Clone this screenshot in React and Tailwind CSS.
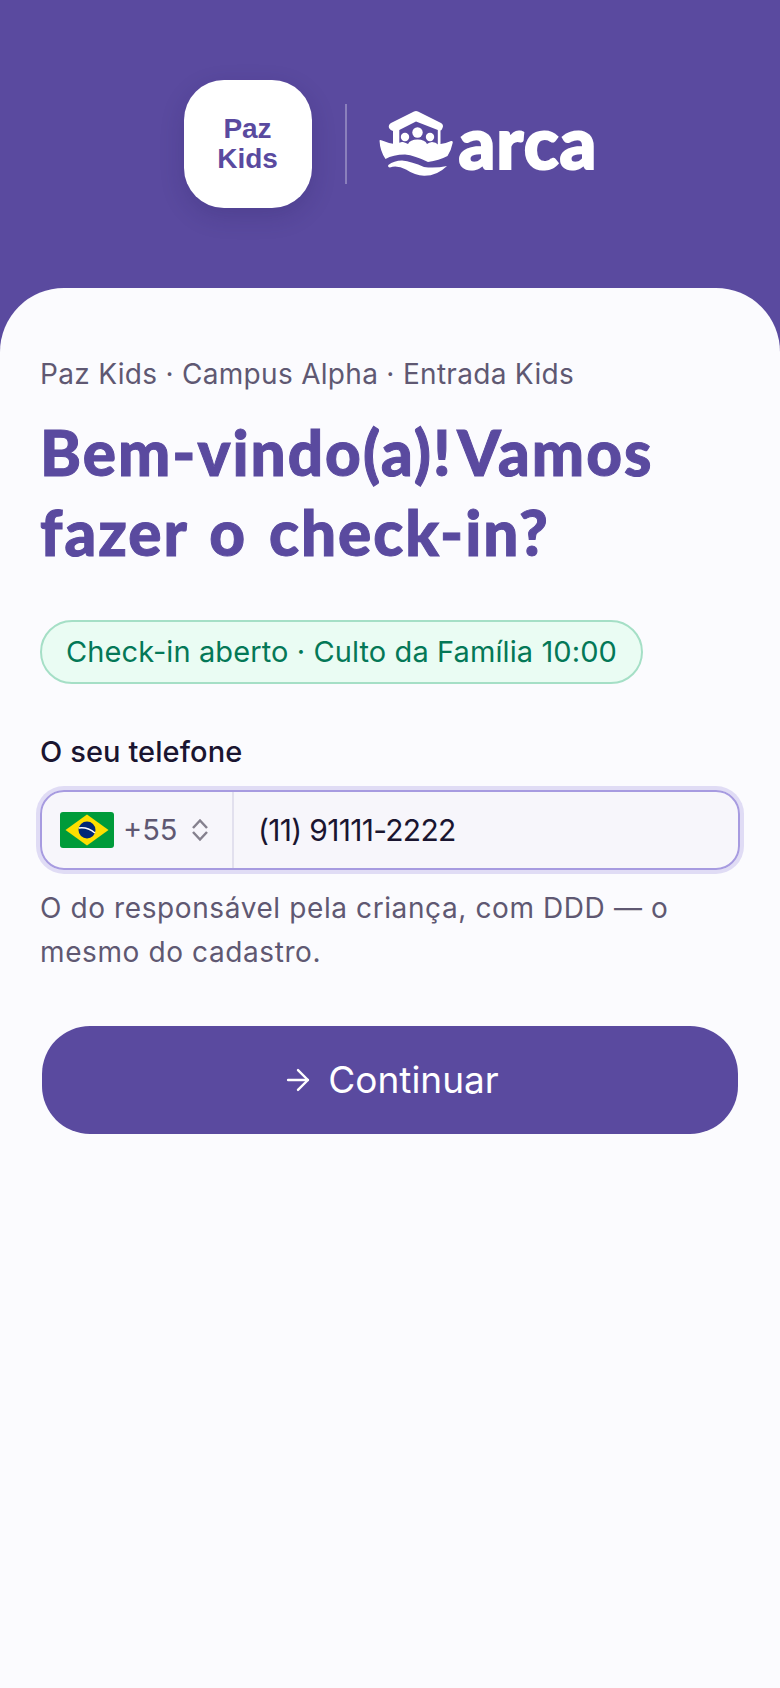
import React, { useState } from "react";
import { ArrowRight } from "lucide-react";

const ArcaBoat = () => (
  <svg width="76" height="66" viewBox="0 0 76 66" fill="none" className="shrink-0">
    {/* roof and walls */}
    <path
      d="M37 1 Q38 1 39 1.6 L62 13 Q65 15 63.5 18 Q62.500 20.500 61.500 20.500 L61.500 36 L14 36 L14 21 Q11.500 20.500 10 18 Q9 15 12 13 L35 1.600 Q36 1 37 1Z"
      fill="#fff"
    />
    <path d="M37 11.500 L20.300 20 L20.300 36 L58.800 36 L58.800 20 Z" fill="#5A4A9F" />
    <circle cx="26" cy="27" r="4.200" fill="#fff" />
    <circle cx="38.500" cy="22.500" r="5.200" fill="#fff" />
    <circle cx="51" cy="27" r="4.200" fill="#fff" />
    {/* hull */}
    <path
      d="M0.500 30.500 Q1 29.500 3 30.500 Q11 34 18 34.500 Q20 31.500 24 32 Q27 33 29 34 Q31 29.500 38.500 29.500 Q46 29.500 48 34 Q50 32.500 53 32 Q57 32 59 34.500 Q66 34 72 31 Q74.500 30.500 73.500 33.500 Q72 41 68.500 46 Q60 50.500 49 52 Q36 45.500 26 44.500 Q14 44.500 6.500 49 Q1 41 0.500 30.500Z"
      fill="#fff"
    />
    {/* wave */}
    <path
      d="M9.300 55 Q15 50.500 23 50.500 Q33 51.500 45 57 Q56 58.500 68 56 Q58 66 45 65.800 Q36 65.500 27 59.500 Q18 55 11 57.500 Q8.500 57 9.300 55Z"
      fill="#fff"
    />
  </svg>
);

const BrazilFlag = () => (
  <svg width="54" height="36" viewBox="0 0 54 36" className="shrink-0">
    <rect width="54" height="36" rx="3" fill="#009B3A" />
    <path d="M27 2.500 L48.500 18 L27 33.500 L5.500 18Z" fill="#FEDF00" />
    <circle cx="27" cy="18" r="8.500" fill="#002776" />
    <path d="M18.800 16 Q27 14.500 35 21" stroke="#fff" strokeWidth="1.600" fill="none" />
  </svg>
);

const UpDown = () => (
  <svg width="18" height="24" viewBox="0 0 18 24" fill="none" stroke="#85818E" strokeWidth="2.500" className="shrink-0">
    <path d="M2 10 L9 2.500 L16 10" />
    <path d="M2 14 L9 21.500 L16 14" />
  </svg>
);

const App = () => {
  const [phone, setPhone] = useState("(11) 91111-2222");

  return (
    <div className="min-h-screen flex flex-col bg-[#5A4A9F] font-['Inter',sans-serif]">
      {/* Logos */}
      <header className="h-[288px] shrink-0 flex items-center justify-center pb-[1px]">
        <div className="w-[128px] h-[128px] rounded-[40px] bg-white shadow-[0_8px_24px_rgba(30,20,80,0.18)] flex items-center justify-center text-center text-[28px] leading-[30px] font-bold text-[#5A4A9F] font-['Liberation_Sans',sans-serif]">
          Paz
          <br />
          Kids
        </div>
        <div className="w-[2px] h-[80px] bg-white/30 ml-[33px] mr-[32px]" />
        <div className="flex items-end gap-[4px] w-[218px] -mt-[1px]">
          <ArcaBoat />
          <span className="text-[72px] leading-[58px] h-[64px] tracking-[1px] font-black text-white [-webkit-text-stroke:2px_white] font-['Lato',sans-serif]">
            arca
          </span>
        </div>
      </header>

      {/* Card */}
      <main className="flex-1 bg-[#FBFBFE] rounded-t-[64px] px-[40px] pt-[66px]">
        <p className="text-[28px] leading-[40px] tracking-[0.3px] text-[#5F5872]">
          Paz Kids · Campus Alpha · Entrada Kids
        </p>
        <h1 className="mt-[18px] text-[62px] leading-[80px] font-black tracking-[2px] [word-spacing:5px] [-webkit-text-stroke:1px_#5A4A9F] text-[#5A4A9F] font-['Lato',sans-serif]">
          Bem-vindo(a)! <span className="-ml-[17px]">Vamos</span> fazer o check-in?
        </h1>

        <div className="mt-[48px] inline-flex items-center h-[64px] px-[24px] rounded-full border-2 border-[#A5DFC6] bg-[#EAFCF3] text-[29px] tracking-[0.1px] text-[#047857]">
          Check-in aberto · Culto da Família 10:00
        </div>

        <label className="block mt-[46px] text-[29px] leading-[44px] font-medium tracking-[0.1px] text-[#1A1530]">
          O seu telefone
        </label>

        <div className="mt-[16px] ring-4 ring-[#E0DCF5] rounded-[24px]">
          <div className="flex h-[80px] border-2 border-[#A79BE0] rounded-[24px] bg-[#F7F6FB] overflow-hidden">
            <div className="flex items-center w-[192px] shrink-0 pl-[18px] border-r-2 border-[#E2E0EE]">
              <BrazilFlag />
              <span className="ml-[9px] text-[29px] text-[#5F5872]">+55</span>
              <span className="ml-[14px]">
                <UpDown />
              </span>
            </div>
            <input
              type="tel"
              value={phone}
              onChange={(e) => setPhone(e.target.value)}
              className="flex-1 min-w-0 bg-transparent pl-[24px] text-[30px] tracking-[-0.7px] text-[#1A1530] outline-none"
            />
          </div>
        </div>

        <p className="mt-[16px] text-[28px] leading-[44px] tracking-[0.6px] text-[#5F5872]">
          O do responsável pela criança, com DDD — o mesmo do cadastro.
        </p>

        <button
          type="button"
          className="mt-[52px] mx-[2px] w-[696px] h-[108px] rounded-[48px] bg-[#5A4A9F] text-white flex items-center justify-center gap-[13px] text-[37px]"
        >
          <ArrowRight size={34} strokeWidth={1.7} />
          Continuar
        </button>
      </main>
    </div>
  );
};

export default App;
